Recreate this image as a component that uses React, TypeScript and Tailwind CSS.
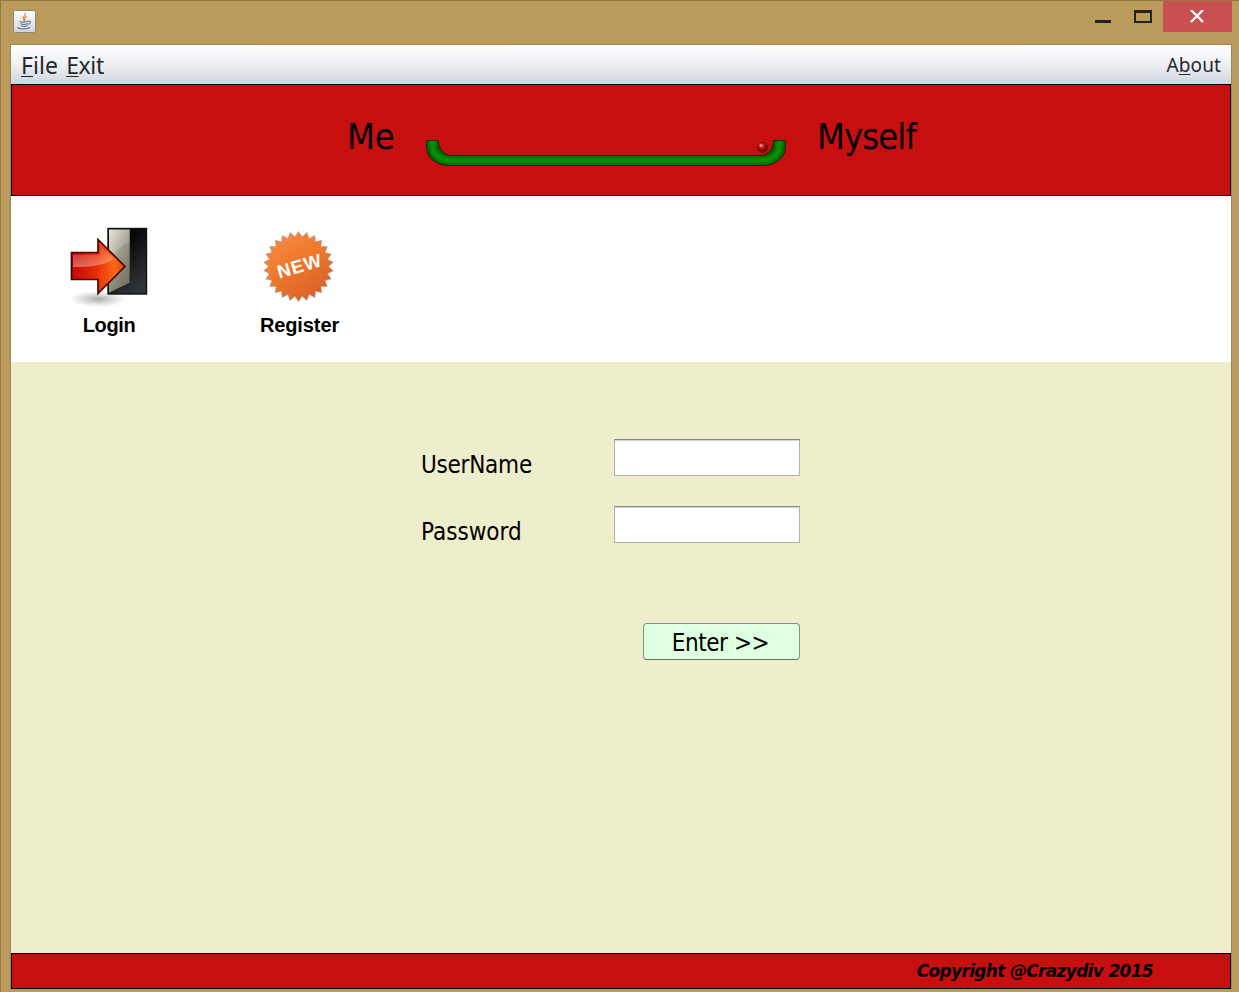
import type { ReactNode } from "react";

function JavaIcon() {
  return (
    <svg width="24" height="24" viewBox="0 0 24 24">
      <defs>
        <linearGradient id="tile" x1="0" y1="0" x2="0" y2="1">
          <stop offset="0" stopColor="#ffffff" />
          <stop offset="1" stopColor="#d3d4d8" />
        </linearGradient>
      </defs>
      <rect x="1.5" y="1.5" width="22" height="22" rx="2" fill="url(#tile)" stroke="#8d8779" />
      <g fill="none" strokeLinecap="round">
        <path d="M13.5 4.2c.6 2.4-3.8 3.2-2.2 5.6.4.7.8 1 .5 1.9M14.7 7.3c-2 .7-2.7 1.7-1.8 2.8.5.7.3 1.2-.2 1.6" stroke="#e58a3c" strokeWidth="1.2" />
        <path d="M7.8 12.5c1.8.9 6.5.8 8.4-.2M8.7 14.7c1.8.8 5.2.7 6.8 0M9.3 16.8c1.8.7 4.4.7 5.9 0M16.6 12.2c2.7-.4 2 2.5-.3 3M6.5 18.3c-1.5.7 0 1.3 3.4 1.5 4.2.2 8.2-.5 7.6-1.5" stroke="#5a7f9d" strokeWidth="1.1" />
      </g>
    </svg>
  );
}

function Pipe() {
  const shape =
    "M6.5 5.5H18.5C18.5 14 24 20.5 32 20.5H340C348 20.5 353.5 14 353.5 5.5H365.5V12C365.5 23 355 30.5 343 30.5H29C17 30.5 6.5 23 6.5 12Z";
  const core = "M12.5 5V10C12.5 19 20 25.5 31 25.5H341C352 25.5 359.5 19 359.5 10V5";
  return (
    <svg width="372" height="36" viewBox="0 0 372 36">
      <defs>
        <clipPath id="pipe">
          <path d={shape} />
        </clipPath>
        <radialGradient id="ball" cx=".4" cy=".3">
          <stop offset="0" stopColor="#f28a8a" />
          <stop offset=".45" stopColor="#d01919" />
          <stop offset="1" stopColor="#7c0909" />
        </radialGradient>
      </defs>
      <path d={shape} fill="#025c02" />
      <g clipPath="url(#pipe)" fill="none">
        <path d={core} stroke="#037003" strokeWidth="9" />
        <path d={core} stroke="#058205" strokeWidth="6" />
        <path d={core} stroke="#079007" strokeWidth="3" />
      </g>
      <path d={shape} fill="none" stroke="#000" strokeDasharray="1 1" />
      <circle cx="342.5" cy="12.5" r="5" fill="url(#ball)" stroke="#5a0505" strokeWidth="1" strokeDasharray="1 1" />
      <circle cx="340.5" cy="10.5" r="1" fill="#f9c0c0" />
    </svg>
  );
}

function LoginIcon() {
  return (
    <svg width="90" height="84" viewBox="0 0 90 84">
      <defs>
        <linearGradient id="dark" x1="0" y1="0" x2=".6" y2="1">
          <stop offset="0" stopColor="#000" />
          <stop offset=".4" stopColor="#08090a" />
          <stop offset="1" stopColor="#303336" />
        </linearGradient>
        <linearGradient id="door" x1="0" y1="0" x2=".7" y2="1">
          <stop offset="0" stopColor="#e4e1d5" />
          <stop offset=".5" stopColor="#9d988a" />
          <stop offset="1" stopColor="#756f61" />
        </linearGradient>
        <linearGradient id="arrow" x1="0" y1="0" x2="1" y2="0">
          <stop offset="0" stopColor="#c40808" />
          <stop offset=".45" stopColor="#e72b08" />
          <stop offset=".8" stopColor="#ff6814" />
          <stop offset="1" stopColor="#e84205" />
        </linearGradient>
        <linearGradient id="shine" x1="0" y1="0" x2="0" y2="1">
          <stop offset="0" stopColor="#fff" stopOpacity=".05" />
          <stop offset="1" stopColor="#fff" stopOpacity=".35" />
        </linearGradient>
        <radialGradient id="shade">
          <stop offset="0" stopColor="#888" stopOpacity=".7" />
          <stop offset="1" stopColor="#999" stopOpacity="0" />
        </radialGradient>
      </defs>
      <ellipse cx="34" cy="75" rx="28" ry="8" fill="url(#shade)" />
      <rect x="44" y="4.5" width="38.5" height="65.5" fill="url(#dark)" stroke="#111" strokeWidth="1.4" />
      <path d="M45 5.5H66V59L45 69Z" fill="url(#door)" />
      <path d="M45 40C49 29 56 22 66 18V5.5H45Z" fill="#fff" opacity=".16" />
      <path d="M66 5.5V59L45 69" fill="none" stroke="#222" strokeWidth=".7" />
      <path d="M7.5 28.5H34V15.5L61 42.5L34 69.5V55.5H7.5Z" fill="url(#arrow)" stroke="#3b0b05" strokeWidth="1.7" />
      <path d="M9 31H36V21L50 35C37 43 22 43 9 43Z" fill="url(#shine)" />
    </svg>
  );
}

function NewBadge() {
  const points = Array.from({ length: 52 }, (_, i) => {
    const angle = (i * Math.PI) / 26 - Math.PI / 2;
    const r = i % 2 === 0 ? 35 : 30;
    return `${(39.5 + r * Math.cos(angle)).toFixed(2)},${(40.5 + r * Math.sin(angle)).toFixed(2)}`;
  }).join(" ");
  return (
    <svg width="80" height="80" viewBox="0 0 80 80">
      <defs>
        <linearGradient id="orange" x1="0" y1="0" x2=".7" y2="1">
          <stop offset="0" stopColor="#f88d4b" />
          <stop offset=".5" stopColor="#f0792c" />
          <stop offset="1" stopColor="#d8602a" />
        </linearGradient>
      </defs>
      <polygon points={points} fill="url(#orange)" stroke="#b9a59a" strokeWidth=".6" />
      <text x="17.5" y="46.5" textLength="45" transform="rotate(-16 40 40)" fontFamily="Liberation Sans, sans-serif" fontWeight="700" fontSize="18.5" fill="#fff">NEW</text>
    </svg>
  );
}

function MenuItem({ children, className }: { children: ReactNode; className: string }) {
  return <button className={`whitespace-nowrap text-[#26282d] ${className}`}>{children}</button>;
}

const key = "underline decoration-1 underline-offset-[2px] [text-decoration-skip-ink:none]";
const tahoma = "font-['DejaVu_Sans_Condensed','DejaVu_Sans',sans-serif] [font-stretch:condensed]";

function Field({ label, type, spacing }: { label: string; type: string; spacing: string }) {
  return (
    <label className="flex h-[37px] w-[379px] justify-between">
      <span className={`mt-[10px] text-[24px] leading-[32px] ${spacing}`}>{label}</span>
      <input
        type={type}
        className="h-[37px] w-[186px] border border-[#b3b3a7] border-t-[#85857b] bg-white px-2 shadow-[inset_0_1px_1px_#d5d5d0] outline-none"
      />
    </label>
  );
}

export default function App() {
  return (
    <div className="flex h-[992px] w-[1239px] flex-col overflow-hidden border-l border-t border-[#977641] bg-[#bb9b5c] pl-[9px] pr-[7px]">
      <header className="flex h-[43px] shrink-0 justify-between">
        <div className="ml-[2px] mt-2">
          <JavaIcon />
        </div>
        <div className="flex h-[31px] items-center">
          <button aria-label="Minimize" className="flex h-full w-10 items-center justify-center">
            <svg width="16" height="20"><rect y="13" width="16" height="3" fill="#24221c" /></svg>
          </button>
          <button aria-label="Maximize" className="flex h-full w-10 items-center justify-center">
            <svg width="18" height="16"><path d="M1 2H17V13H1Z" fill="none" stroke="#24221c" strokeWidth="2" /><path d="M0 2.5H18" stroke="#24221c" strokeWidth="3" /></svg>
          </button>
          <button aria-label="Close" className="flex h-full w-[69px] items-center justify-center bg-[#ca4f51] pr-px">
            <svg width="14" height="14"><path d="M1 0L13 12M13 0L1 12" stroke="#fff" strokeWidth="2.3" /></svg>
          </button>
        </div>
      </header>

      <div className="flex h-[945px] shrink-0 flex-col border-l border-r border-t border-[#9d8757]">
        <nav className="flex h-[39px] shrink-0 items-center justify-between bg-linear-to-b from-white via-[#eef0f5] to-[#d2d5dd] pl-[10px] pr-[10px] font-['Noto_Sans',sans-serif]">
          <div className="flex gap-[8px] pt-px text-[23px]">
            <MenuItem className="tracking-[0.1px]"><span className={key}>F</span>ile</MenuItem>
            <MenuItem className="tracking-[-0.4px]"><span className={key}>E</span>xit</MenuItem>
          </div>
          <MenuItem className="pt-[2px] text-[19px] tracking-[0.1px]">A<span className={key}>b</span>out</MenuItem>
        </nav>

        <section className={`flex h-[112px] shrink-0 border border-black bg-[#c80f10] text-[36px] leading-[44px] ${tahoma}`}>
          <h1 className="ml-[335px] mt-[30px] w-[73px] tracking-[-0.3px]">Me</h1>
          <div className="mt-[50px] h-9 w-[372px]"><Pipe /></div>
          <h1 className="ml-[25px] mt-[30px] tracking-[-0.9px]">Myself</h1>
        </section>

        <section className="flex h-[166px] shrink-0 bg-white font-['Liberation_Sans',sans-serif] text-[20px] font-bold leading-6">
          <button className="ml-[44px] flex w-[108px] flex-col items-center pt-[28px]">
            <LoginIcon />
            <span className="mt-[5px] tracking-[-0.4px]">Login</span>
          </button>
          <button className="ml-[76px] flex w-[120px] flex-col items-center pt-[30px]">
            <NewBadge />
            <span className="mt-[7px] pl-px tracking-[-0.1px]">Register</span>
          </button>
        </section>

        <main className={`flex grow flex-col bg-[#eeedcc] pl-[410px] pt-[77px] text-black ${tahoma}`}>
          <form className="flex w-[379px] flex-col" onSubmit={(e) => e.preventDefault()}>
            <div className="flex flex-col gap-[30px]">
              <Field label="UserName" type="text" spacing="tracking-[-0.25px]" />
              <Field label="Password" type="password" spacing="tracking-[0px]" />
            </div>
            <button className="mt-[80px] h-[37px] w-[157px] self-end rounded border border-[#80957e] border-b-[#647561] bg-[#dfffe1] pr-[2px] pt-[3px] text-[24px] leading-[32px] tracking-[-0.45px]">
              Enter &gt;&gt;
            </button>
          </form>
        </main>

        <footer className="flex h-[36px] shrink-0 items-center justify-end border border-black bg-[#c80f10] pr-[77px] pt-px font-['DejaVu_Sans',sans-serif] text-[17px] font-bold italic">
          <span className="whitespace-nowrap tracking-[-0.68px]">Copyright @Crazydiv 2015</span>
        </footer>
      </div>
    </div>
  );
}
